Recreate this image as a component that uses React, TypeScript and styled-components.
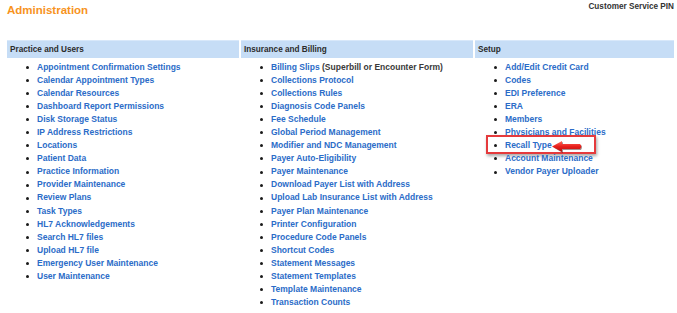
import React from 'react'
import styled, { createGlobalStyle } from 'styled-components'

const GlobalStyle = createGlobalStyle`
  body {
    margin: 0;
    background: #ffffff;
    font-family: 'Liberation Sans', Arial, sans-serif;
  }
`

const Page = styled.div`
  width: 677px;
  height: 313px;
  padding: 0 3px 0 7px;
  box-sizing: border-box;
  overflow: hidden;
`

const TopBar = styled.div`
  display: flex;
  justify-content: space-between;
  align-items: flex-start;
  height: 40px;
`

const Title = styled.h1`
  margin: 3px 0 0 0;
  font-size: 11.5px;
  line-height: 14px;
  font-weight: bold;
  color: #f7931e;
`

const PinLabel = styled.span`
  margin-top: 2px;
  font-size: 8.2px;
  line-height: 10px;
  font-weight: bold;
  color: #333333;
`

const Grid = styled.div`
  display: grid;
  grid-template-columns: 232px 232px 1fr;
  column-gap: 2px;
`

const Column = styled.div`
  display: flex;
  flex-direction: column;
`

const HeaderCell = styled.div`
  height: 18px;
  background: #c6ddf6;
  border-top: 1px solid #d8e8fa;
  box-sizing: border-box;
  padding-left: 3px;
  display: flex;
  align-items: center;
  font-size: 8.2px;
  font-weight: bold;
  color: #2b2b2b;
`

const LinkList = styled.ul`
  list-style: none;
  margin: 2.5px 0 0 0;
  padding: 0 0 0 30px;
`

const Item = styled.li`
  position: relative;
  font-size: 8.5px;
  line-height: 13.1px;
  height: 13.1px;
  font-weight: bold;
  white-space: nowrap;

  &::before {
    content: '';
    position: absolute;
    left: -11px;
    top: 5.3px;
    width: 3px;
    height: 3px;
    border-radius: 50%;
    background: #1a1a1a;
  }
`

const ItemLink = styled.a`
  color: #2b6cc8;
  text-decoration: none;
`

const Note = styled.span`
  color: #3a3a3a;
`

const Highlight = styled.span`
  position: absolute;
  left: -19px;
  top: -4px;
  width: 110px;
  height: 19px;
  box-sizing: border-box;
  border: 2px solid #e53a3c;
  box-shadow: 1px 2px 3px rgba(0, 0, 0, 0.35);
  pointer-events: none;
`

const Arrow = styled.svg`
  position: absolute;
  left: 47px;
  top: 2px;
  overflow: visible;
`

type Link = { label: string; note?: string; marked?: boolean }

const columns: { title: string; links: Link[] }[] = [
  {
    title: 'Practice and Users',
    links: [
      { label: 'Appointment Confirmation Settings' },
      { label: 'Calendar Appointment Types' },
      { label: 'Calendar Resources' },
      { label: 'Dashboard Report Permissions' },
      { label: 'Disk Storage Status' },
      { label: 'IP Address Restrictions' },
      { label: 'Locations' },
      { label: 'Patient Data' },
      { label: 'Practice Information' },
      { label: 'Provider Maintenance' },
      { label: 'Review Plans' },
      { label: 'Task Types' },
      { label: 'HL7 Acknowledgements' },
      { label: 'Search HL7 files' },
      { label: 'Upload HL7 file' },
      { label: 'Emergency User Maintenance' },
      { label: 'User Maintenance' },
    ],
  },
  {
    title: 'Insurance and Billing',
    links: [
      { label: 'Billing Slips', note: ' (Superbill or Encounter Form)' },
      { label: 'Collections Protocol' },
      { label: 'Collections Rules' },
      { label: 'Diagnosis Code Panels' },
      { label: 'Fee Schedule' },
      { label: 'Global Period Management' },
      { label: 'Modifier and NDC Management' },
      { label: 'Payer Auto-Eligibility' },
      { label: 'Payer Maintenance' },
      { label: 'Download Payer List with Address' },
      { label: 'Upload Lab Insurance List with Address' },
      { label: 'Payer Plan Maintenance' },
      { label: 'Printer Configuration' },
      { label: 'Procedure Code Panels' },
      { label: 'Shortcut Codes' },
      { label: 'Statement Messages' },
      { label: 'Statement Templates' },
      { label: 'Template Maintenance' },
      { label: 'Transaction Counts' },
    ],
  },
  {
    title: 'Setup',
    links: [
      { label: 'Add/Edit Credit Card' },
      { label: 'Codes' },
      { label: 'EDI Preference' },
      { label: 'ERA' },
      { label: 'Members' },
      { label: 'Physicians and Facilities' },
      { label: 'Recall Type', marked: true },
      { label: 'Account Maintenance' },
      { label: 'Vendor Payer Uploader' },
    ],
  },
]

const RedArrow = () => (
  <Arrow width="31" height="11" viewBox="0 0 31 11">
    <defs>
      <linearGradient id="arrowFill" x1="0" y1="0" x2="0" y2="1">
        <stop offset="0" stopColor="#ff6a5c" />
        <stop offset="0.5" stopColor="#e8201c" />
        <stop offset="1" stopColor="#b3100e" />
      </linearGradient>
    </defs>
    <path d="M1.5 6.5 L11 1 L11 4 L29 4 Q31 6 29 9 L11 9 L11 12 Z" fill="#3a0a08" opacity="0.45" />
    <path d="M0 5.5 L10 0 L10 3 L28 3 Q30.5 5.5 28 8 L10 8 L10 11 Z" fill="url(#arrowFill)" />
  </Arrow>
)

export default function App() {
  return (
    <Page>
      <GlobalStyle />
      <TopBar>
        <Title>Administration</Title>
        <PinLabel>Customer Service PIN</PinLabel>
      </TopBar>
      <Grid>
        {columns.map((col) => (
          <Column key={col.title}>
            <HeaderCell>{col.title}</HeaderCell>
            <LinkList>
              {col.links.map((link) => (
                <Item key={link.label}>
                  <ItemLink href="#">{link.label}</ItemLink>
                  {link.note && <Note>{link.note}</Note>}
                  {link.marked && (
                    <>
                      <Highlight />
                      <RedArrow />
                    </>
                  )}
                </Item>
              ))}
            </LinkList>
          </Column>
        ))}
      </Grid>
    </Page>
  )
}
